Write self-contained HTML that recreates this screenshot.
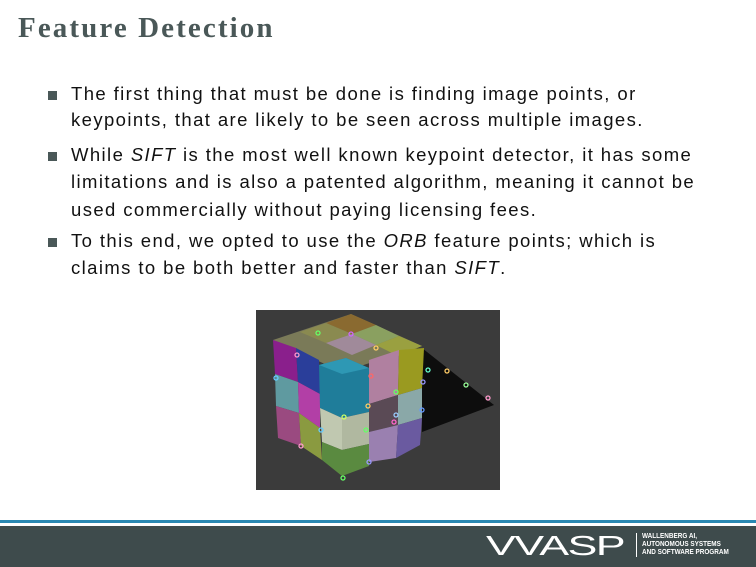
<!DOCTYPE html>
<html><head><meta charset="utf-8"><style>
body{margin:0;width:756px;height:567px;background:#fff;position:relative;overflow:hidden;font-family:"Liberation Sans",sans-serif;}
.t{position:absolute;left:18px;top:12px;font-family:"Liberation Serif",serif;font-weight:bold;font-size:29px;color:#4a5858;letter-spacing:2.1px}
.l{position:absolute;left:71px;font-size:18.5px;letter-spacing:1.4px;color:#111;white-space:nowrap}
.b{position:absolute;left:48px;width:9px;height:9px;background:#4a5858}
.foot{position:absolute;left:0;top:526px;width:756px;height:41px;background:#3e4b4c}
.bl{position:absolute;left:0;top:520px;width:756px;height:3px;background:#2a88b2}
</style></head><body>
<div class="t">Feature Detection</div>
<div class="b" style="top:91px"></div>
<div class="l" style="top:83px">The first thing that must be done is finding image points, or</div>
<div class="l" style="top:109px">keypoints, that are likely to be seen across multiple images.</div>
<div class="b" style="top:152px"></div>
<div class="l" style="top:144px">While <i>SIFT</i> is the most well known keypoint detector, it has some</div>
<div class="l" style="top:171px">limitations and is also a patented algorithm, meaning it cannot be</div>
<div class="l" style="top:199px">used commercially without paying licensing fees.</div>
<div class="b" style="top:238px"></div>
<div class="l" style="top:230px">To this end, we opted to use the <i>ORB</i> feature points; which is</div>
<div class="l" style="top:257px">claims to be both better and faster than <i>SIFT</i>.</div>
<svg style="position:absolute;left:256px;top:310px" width="244" height="180" viewBox="0 0 244 180">
<rect width="244" height="180" fill="#3b3b3b"/>
<polygon points="166,38 238,95 166,122" fill="#0d0d0d"/>
<polygon points="17,30 95,4 166,36 86,62" fill="#7a7a58"/>
<polygon points="70,13 95,4 120,15 96,24" fill="#8a6a30"/>
<polygon points="44,22 70,13 96,24 70,33" fill="#8a8a50"/>
<polygon points="96,24 120,15 143,26 120,35" fill="#8aa060"/>
<polygon points="70,33 96,24 120,35 96,45" fill="#a08a9a"/>
<polygon points="120,35 143,26 166,36 142,46" fill="#9aa040"/>
<polygon points="17,30 40,38 42,72 19,64" fill="#8a1f8c"/>
<polygon points="40,38 63,50 64,84 42,72" fill="#2a3e9a"/>
<polygon points="19,64 42,72 43,103 20,96" fill="#5f9aa0"/>
<polygon points="42,72 64,84 64,118 43,103" fill="#b23fa6"/>
<polygon points="20,96 43,103 45,136 22,128" fill="#9a4a80"/>
<polygon points="43,103 64,118 66,150 45,136" fill="#8a9a40"/>
<polygon points="63,55 90,48 113,58 113,102 86,108 64,98" fill="#1f7d9a"/>
<polygon points="63,55 90,48 113,58 86,64" fill="#2e98b4"/>
<polygon points="64,98 86,108 86,140 66,132" fill="#c0c8b0"/>
<polygon points="86,108 113,102 113,134 86,140" fill="#b0b8a0"/>
<polygon points="66,132 86,140 86,166 66,150" fill="#5a8a40"/>
<polygon points="86,140 113,134 113,156 86,166" fill="#5a8a40"/>
<polygon points="113,50 143,40 142,85 113,94" fill="#b080a0"/>
<polygon points="143,40 168,38 166,78 142,85" fill="#9a9a20"/>
<polygon points="113,94 142,85 142,115 113,122" fill="#5a4a55"/>
<polygon points="142,85 166,78 166,108 142,115" fill="#8aa8a8"/>
<polygon points="113,122 142,115 140,148 113,152" fill="#9a80b0"/>
<polygon points="142,115 166,108 164,135 140,148" fill="#6a5aa0"/>
<g fill="none" stroke-width="1.3">
<circle cx="62" cy="23" r="2" stroke="#6f6"/><circle cx="95" cy="24" r="2" stroke="#c6f"/><circle cx="120" cy="38" r="2" stroke="#fc6"/><circle cx="41" cy="45" r="2" stroke="#f9c"/><circle cx="20" cy="68" r="2" stroke="#6cf"/><circle cx="115" cy="66" r="2" stroke="#f66"/><circle cx="172" cy="60" r="2" stroke="#6fc"/><circle cx="167" cy="72" r="2" stroke="#99f"/><circle cx="232" cy="88" r="2" stroke="#f9c"/><circle cx="140" cy="82" r="2" stroke="#6f6"/><circle cx="112" cy="96" r="2" stroke="#fc6"/><circle cx="88" cy="107" r="2" stroke="#cf6"/><circle cx="166" cy="100" r="2" stroke="#69f"/><circle cx="138" cy="112" r="2" stroke="#f6c"/><circle cx="110" cy="120" r="2" stroke="#6f6"/><circle cx="65" cy="120" r="2" stroke="#6cf"/><circle cx="87" cy="168" r="2" stroke="#6f6"/><circle cx="113" cy="152" r="2" stroke="#99f"/><circle cx="191" cy="61" r="2" stroke="#fc6"/><circle cx="210" cy="75" r="2" stroke="#9f9"/><circle cx="45" cy="136" r="2" stroke="#f9c"/><circle cx="140" cy="105" r="2" stroke="#9cf"/></g>
</svg>
<div class="bl"></div>
<div class="foot"></div>
<div style="position:absolute;left:486px;top:531px;font-size:28px;color:#fff;letter-spacing:-1px;line-height:30px;transform:scaleX(1.6);transform-origin:left">VVASP</div>
<div style="position:absolute;left:636px;top:533px;width:1px;height:24px;background:#fff"></div>
<div style="position:absolute;left:642px;top:532px;font-size:7.5px;line-height:8px;color:#fff;font-weight:bold;transform:scaleX(0.85);transform-origin:left">WALLENBERG AI,<br>AUTONOMOUS SYSTEMS<br>AND SOFTWARE PROGRAM</div>
</body></html>
